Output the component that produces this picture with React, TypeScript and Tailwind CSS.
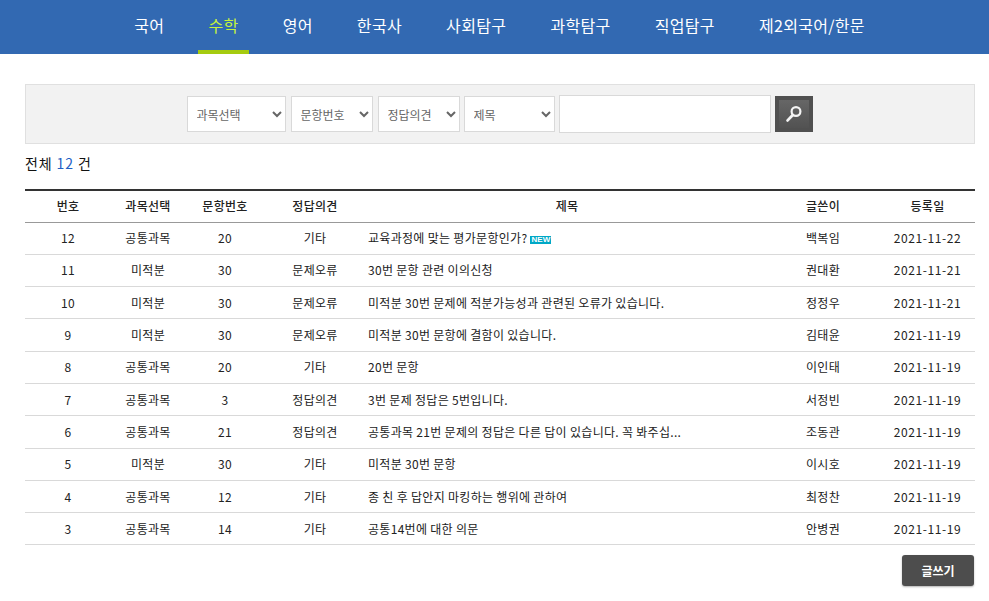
const menus = ['국어', '수학', '영어', '한국사', '사회탐구', '과학탐구', '직업탐구', '제2외국어/한문'];

const rows = [
  { no: 12, subject: '공통과목', q: 20, type: '기타', title: '교육과정에 맞는 평가문항인가?', isNew: true, name: '백복임', date: '2021-11-22' },
  { no: 11, subject: '미적분', q: 30, type: '문제오류', title: '30번 문항 관련 이의신청', name: '권대환', date: '2021-11-21' },
  { no: 10, subject: '미적분', q: 30, type: '문제오류', title: '미적분 30번 문제에 적분가능성과 관련된 오류가 있습니다.', name: '정정우', date: '2021-11-21' },
  { no: 9, subject: '미적분', q: 30, type: '문제오류', title: '미적분 30번 문항에 결함이 있습니다.', name: '김태윤', date: '2021-11-19' },
  { no: 8, subject: '공통과목', q: 20, type: '기타', title: '20번 문항', name: '이인태', date: '2021-11-19' },
  { no: 7, subject: '공통과목', q: 3, type: '정답의견', title: '3번 문제 정답은 5번입니다.', name: '서정빈', date: '2021-11-19' },
  { no: 6, subject: '공통과목', q: 21, type: '정답의견', title: '공통과목 21번 문제의 정답은 다른 답이 있습니다. 꼭 봐주십...', name: '조동관', date: '2021-11-19' },
  { no: 5, subject: '미적분', q: 30, type: '기타', title: '미적분 30번 문항', name: '이시호', date: '2021-11-19' },
  { no: 4, subject: '공통과목', q: 12, type: '기타', title: '종 친 후 답안지 마킹하는 행위에 관하여', name: '최정찬', date: '2021-11-19' },
  { no: 3, subject: '공통과목', q: 14, type: '기타', title: '공통14번에 대한 의문', name: '안병권', date: '2021-11-19' },
];

const SearchSelect = ({ label, width }: { label: string; width: string }) => (
  <select className={`${width} h-[36px] border border-[#d9d9d9] bg-white pl-[5px] text-[12px] text-[#666]`}>
    <option>{label}</option>
  </select>
);

export default function App() {
  return (
    <div className="h-[601px] overflow-hidden bg-white text-[12px] text-[#222] font-['Noto_Sans_CJK_KR','Noto_Sans',sans-serif]">
      {/*Top menu*/}
      <nav className="flex h-[54px] justify-center gap-[44.2px] bg-[#3269b2] pl-[10px]">
        {menus.map((menu) => (
          <a
            key={menu}
            className={
              menu === '수학'
                ? 'relative flex h-full items-center pb-[4px] text-[16px] tracking-[0.3px] text-[#c5f23c]'
                : 'flex h-full items-center pb-[4px] text-[16px] tracking-[0.3px] text-white'
            }
          >
            {menu}
            {menu === '수학' && <span className="absolute bottom-0 left-[-10px] h-[4px] w-[51px] bg-[#a5cb10]" />}
          </a>
        ))}
      </nav>

      <div className="pt-[30px] pr-[14px] pl-[25px]">
        {/*Search box*/}
        <div className="flex h-[60px] items-center justify-center gap-[5px] border border-[#e0e0e0] bg-[#f2f2f2] pr-[1px]">
          <SearchSelect label="과목선택" width="w-[99px]" />
          <SearchSelect label="문항번호" width="w-[82px]" />
          <SearchSelect label="정답의견" width="w-[82px]" />
          <div className="-ml-[1px]">
            <SearchSelect label="제목" width="w-[91px]" />
          </div>
          <input className="-ml-[1px] h-[38px] w-[212px] border border-[#d9d9d9] bg-white" />
          <button className="-ml-[1px] flex h-[36px] w-[38px] items-center justify-center bg-[#505050]">
            <span className="flex h-[28px] w-[30px] items-center justify-center bg-gradient-to-b from-[#666] to-[#525252]">
              <svg width="18" height="18" viewBox="0 0 18 18" fill="none" stroke="#f4f4f4">
                <circle cx="11" cy="6.5" r="4.4" strokeWidth="2.2" />
                <path d="M7.8 10 L2.6 15.4" strokeWidth="2.8" strokeLinecap="round" />
              </svg>
            </span>
          </button>
        </div>

        <div className="mt-[8px] h-[22px] text-[14px] leading-[22px] tracking-[0.9px] text-[#111]">
          전체 <span className="text-[#1f5fc4]">12</span> 건
        </div>

        {/*List*/}
        <table className="mt-[15px] w-full table-fixed border-collapse border-t-2 border-t-[#333] tracking-[0.3px]">
          <colgroup>
            <col className="w-[86px]" />
            <col className="w-[74px]" />
            <col className="w-[80px]" />
            <col className="w-[100px]" />
            <col />
            <col className="w-[114px]" />
            <col className="w-[95px]" />
          </colgroup>
          <thead>
            <tr className="h-[32px] border-b border-b-[#999] text-center">
              <th className="font-medium">번호</th>
              <th className="font-medium">과목선택</th>
              <th className="font-medium">문항번호</th>
              <th className="font-medium">정답의견</th>
              <th className="pl-[3px] font-medium">제목</th>
              <th className="font-medium">글쓴이</th>
              <th className="font-medium">등록일</th>
            </tr>
          </thead>
          <tbody>
            {rows.map((row) => (
              <tr key={row.no} className="h-[32.3px] border-b border-b-[#d9d9d9] text-center">
                <td>{row.no}</td>
                <td>{row.subject}</td>
                <td>{row.q}</td>
                <td>{row.type}</td>
                <td className="pl-[3px] text-left">
                  {row.title}
                  {row.isNew && (
                    <span className="ml-[3px] inline-block h-[8px] w-[21px] bg-[#00a8c6] text-center align-[1px] font-['Liberation_Sans',sans-serif] text-[8px] leading-[8px] font-bold tracking-normal text-white">
                      NEW
                    </span>
                  )}
                </td>
                <td>{row.name}</td>
                <td className="tracking-[0.6px]">{row.date}</td>
              </tr>
            ))}
          </tbody>
        </table>

        <div className="mt-[10px] flex justify-end pr-[1px]">
          <button className="h-[31px] w-[72px] rounded-[3px] bg-[#4d4d4d] text-[12px] font-bold text-white shadow-[0_1px_2px_rgba(0,0,0,0.3)]">
            글쓰기
          </button>
        </div>
      </div>
    </div>
  );
}
